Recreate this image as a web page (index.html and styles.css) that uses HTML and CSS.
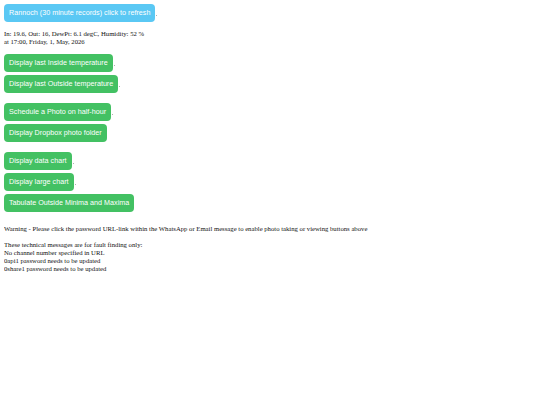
FILE: index.html
```html
<!DOCTYPE html>
<html>
<head>
<meta charset="utf-8">
<link rel="stylesheet" href="styles.css">
</head>
<body>
<div class="row"><button class="btn blue">Rannoch (30 minute records) click to refresh</button><span class="dot"></span></div>
<p class="info">In: 19.6, Out: 16, DewPt: 6.1 degC, Humidity: 52 %<br>at 17:00, Friday, 1, May, 2026</p>
<div class="group">
  <div class="row"><button class="btn green">Display last Inside temperature</button><span class="dot"></span></div>
  <div class="row"><button class="btn green">Display last Outside temperature</button><span class="dot"></span></div>
</div>
<div class="group">
  <div class="row"><button class="btn green">Schedule a Photo on half-hour</button><span class="dot"></span></div>
  <div class="row"><button class="btn green">Display Dropbox photo folder</button></div>
</div>
<div class="group">
  <div class="row"><button class="btn green">Display data chart</button><span class="dot"></span></div>
  <div class="row"><button class="btn green">Display large chart</button><span class="dot"></span></div>
  <div class="row"><button class="btn green">Tabulate Outside Minima and Maxima</button></div>
</div>
<p class="msg">Warning - Please click the password URL-link within the WhatsApp or Email message to enable photo taking or viewing buttons above</p>
<p class="msg">These technical messages are for fault finding only:<br>No channel number specified in URL<br>0api1 password needs to be updated<br>0share1 password needs to be updated</p>
</body>
</html>
```
FILE: styles.css
```css
html, body {
  background: #ffffff;
}
body {
  margin: 4px 4px;
  font-family: "Liberation Serif", "Times New Roman", serif;
  font-size: 6.7px;
  line-height: 8px;
  color: #111111;
}
.row {
  display: flex;
  align-items: flex-end;
}
.btn {
  height: 18px;
  padding: 0 5px;
  border: none;
  border-radius: 4px;
  color: #ffffff;
  font-family: "Liberation Sans", Arial, sans-serif;
  font-size: 7.2px;
  line-height: 18px;
  white-space: nowrap;
  cursor: pointer;
}
.blue {
  background: #5ac8f4;
}
.green {
  background: #43c163;
}
.dot {
  width: 1px;
  height: 1px;
  background: #b0b0b0;
  margin-left: 1px;
  margin-bottom: 6px;
}
.info {
  margin: 8px 0 8px 0;
}
.group {
  display: flex;
  flex-direction: column;
  align-items: flex-start;
  gap: 3px;
  margin-bottom: 10px;
}
.msg {
  margin: 0 0 8px 0;
}
.group + .msg {
  margin-top: 13px;
}
```
